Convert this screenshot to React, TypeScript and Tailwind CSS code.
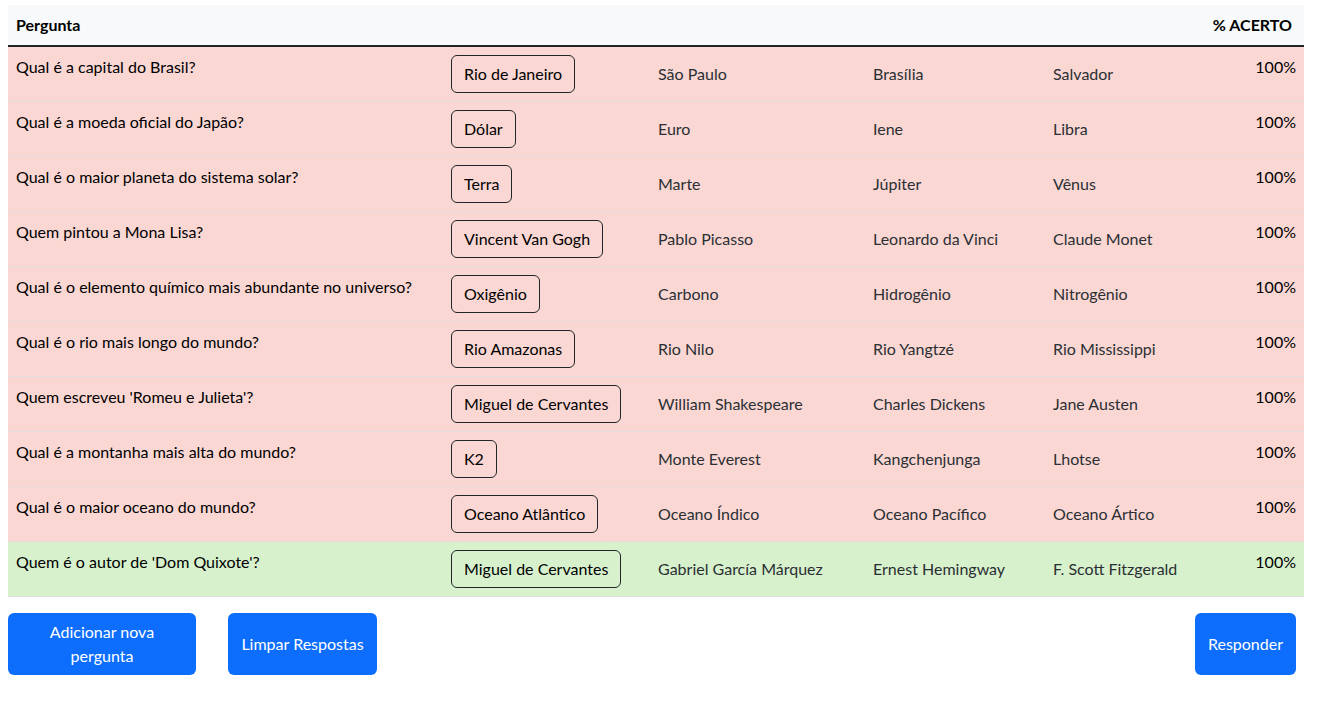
import React from "react";

type Q = { q: string; opts: string[]; sel: number; ok: boolean };

const data: Q[] = [
  { q: "Qual é a capital do Brasil?", opts: ["Rio de Janeiro", "São Paulo", "Brasília", "Salvador"], sel: 0, ok: false },
  { q: "Qual é a moeda oficial do Japão?", opts: ["Dólar", "Euro", "Iene", "Libra"], sel: 0, ok: false },
  { q: "Qual é o maior planeta do sistema solar?", opts: ["Terra", "Marte", "Júpiter", "Vênus"], sel: 0, ok: false },
  { q: "Quem pintou a Mona Lisa?", opts: ["Vincent Van Gogh", "Pablo Picasso", "Leonardo da Vinci", "Claude Monet"], sel: 0, ok: false },
  { q: "Qual é o elemento químico mais abundante no universo?", opts: ["Oxigênio", "Carbono", "Hidrogênio", "Nitrogênio"], sel: 0, ok: false },
  { q: "Qual é o rio mais longo do mundo?", opts: ["Rio Amazonas", "Rio Nilo", "Rio Yangtzé", "Rio Mississippi"], sel: 0, ok: false },
  { q: "Quem escreveu 'Romeu e Julieta'?", opts: ["Miguel de Cervantes", "William Shakespeare", "Charles Dickens", "Jane Austen"], sel: 0, ok: false },
  { q: "Qual é a montanha mais alta do mundo?", opts: ["K2", "Monte Everest", "Kangchenjunga", "Lhotse"], sel: 0, ok: false },
  { q: "Qual é o maior oceano do mundo?", opts: ["Oceano Atlântico", "Oceano Índico", "Oceano Pacífico", "Oceano Ártico"], sel: 0, ok: false },
  { q: "Quem é o autor de 'Dom Quixote'?", opts: ["Miguel de Cervantes", "Gabriel García Márquez", "Ernest Hemingway", "F. Scott Fitzgerald"], sel: 0, ok: true },
];

export default function App() {
  return (
    <div className="min-h-screen bg-white text-[16px] leading-6 text-[#212529]" style={{ fontFamily: "Lato, 'Noto Sans', sans-serif" }}>
      <div className="pt-[5px] pl-2 w-[1304px]">
        <table className="w-[1296px] table-fixed border-collapse">
          <colgroup>
            <col className="w-[435px]" />
            <col className="w-[207px]" />
            <col className="w-[215px]" />
            <col className="w-[180px]" />
            <col className="w-[150px]" />
            <col className="w-[109px]" />
          </colgroup>
          <thead>
            <tr className="bg-[#f8f9fa] border-b-2 border-[#212529]">
              <th className="p-2 text-left font-bold text-black">Pergunta</th>
              <th className="p-2"></th>
              <th className="p-2"></th>
              <th className="p-2"></th>
              <th className="p-2"></th>
              <th className="py-2 pr-3 pl-0 text-right font-bold text-black whitespace-nowrap">% ACERTO</th>
            </tr>
          </thead>
          <tbody>
            {data.map((r, i) => (
              <tr key={i} className={`${r.ok ? "bg-[#d7f1cd]" : "bg-[#fad7d3]"} border-b border-[#e6dcdc]`}>
                <td className="p-2 align-top text-black">{r.q}</td>
                {r.opts.map((o, j) => (
                  <td key={j} className="p-2 align-top">
                    {j === r.sel ? (
                      <button className="h-[38px] px-3 border border-[#212529] rounded-md text-black leading-6 whitespace-nowrap">{o}</button>
                    ) : (
                      <span className="flex items-center h-[38px] text-[#2b2f33] whitespace-nowrap">{o}</span>
                    )}
                  </td>
                ))}
                <td className="p-2 align-top text-right text-black">100%</td>
              </tr>
            ))}
          </tbody>
        </table>
        <div className="mt-4 flex items-start w-[1288px]">
          <button className="w-[188px] h-[62px] bg-[#0d6efd] text-white rounded-md px-3 leading-6">Adicionar nova pergunta</button>
          <button className="ml-8 w-[149px] h-[62px] bg-[#0d6efd] text-white rounded-md px-3 leading-6">Limpar Respostas</button>
          <button className="ml-auto w-[101px] h-[62px] bg-[#0d6efd] text-white rounded-md px-3 leading-6">Responder</button>
        </div>
      </div>
    </div>
  );
}
